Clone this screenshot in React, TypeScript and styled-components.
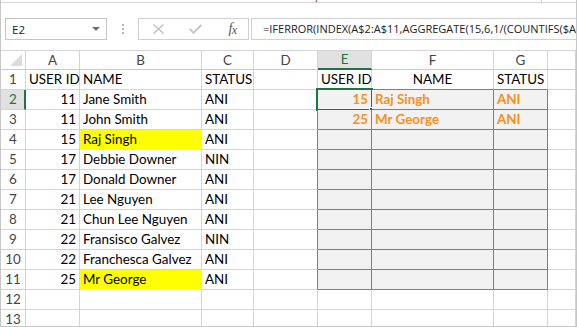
import React from 'react';
import styled, { createGlobalStyle, css } from 'styled-components';

const Global = createGlobalStyle`
  html, body { margin: 0; padding: 0; background: #fff; }
  body { width: 577px; height: 327px; overflow: hidden; }
  * { box-sizing: border-box; }
`;

const Window = styled.div`
  width: 577px;
  height: 327px;
  display: flex;
  flex-direction: column;
  border-left: 1px solid #c6c6c6;
  border-right: 1px solid #c6c6c6;
  border-bottom: 1px solid #c6c6c6;
  overflow: hidden;
  background: #fff;
`;

const Ribbon = styled.div`
  height: 3px;
  flex: none;
  display: flex;
  border-bottom: 1px solid #d4d4d4;
  overflow: hidden;
  position: relative;
`;

const RibbonLabel = styled.div`
  margin-left: 228px;
  margin-top: -11px;
  font: 12px 'Open Sans', sans-serif;
  line-height: 13px;
  color: #555;
  white-space: nowrap;
  width: 313px;
  border-right: 1px solid #d4d4d4;
  height: 16px;
`;

const FormulaBar = styled.div`
  height: 47px;
  flex: none;
  display: flex;
  align-items: flex-start;
  padding: 15px 0 0 4px;
`;

const NameBox = styled.div`
  width: 102px;
  height: 22px;
  border: 1px solid #c6c6c6;
  display: flex;
  align-items: center;
  justify-content: space-between;
  padding: 0 6px 0 6px;
  font: 11.5px 'Open Sans', sans-serif;
  color: #222;
`;

const Dots = styled.div`
  width: 31px;
  height: 22px;
  display: flex;
  flex-direction: column;
  align-items: center;
  justify-content: center;
  gap: 2px;
  & > span {
    width: 2px;
    height: 2px;
    background: #b5b5b5;
  }
`;

const ButtonBox = styled.div`
  width: 111px;
  height: 22px;
  border: 1px solid #d0d0d0;
  display: grid;
  grid-template-columns: 38px 36px 1fr;
  align-items: center;
  justify-items: center;
`;

const Fx = styled.span`
  font: italic 14px 'Liberation Serif', serif;
  color: #555;
  letter-spacing: -0.5px;
  padding-left: 4px;
  & > sub {
    font-size: 12px;
    vertical-align: -1px;
  }
`;

const FormulaInput = styled.div`
  flex: 1;
  margin-left: 2px;
  height: 22px;
  border: 1px solid #d0d0d0;
  border-right: none;
  padding-left: 11px;
  font: 11px 'Open Sans', sans-serif;
  line-height: 20px;
  color: #222;
  white-space: nowrap;
  overflow: hidden;
`;

const Sheet = styled.div`
  flex: 1;
  overflow: hidden;
  border-top: 1px solid #d4d4d4;
  display: grid;
  grid-template-columns: 25px 54px 122px 52px 64px 54px 122px 54px 1fr;
  grid-template-rows: 19px repeat(13, 20px);
`;

const HeaderBase = css`
  border-right: 1px solid #d4d4d4;
  border-bottom: 1px solid #c8c8c8;
  font: 13.4px 'Lato', 'Noto Sans', sans-serif;
  color: #444;
  text-align: center;
  white-space: nowrap;
`;

const Corner = styled.div`
  ${HeaderBase};
  position: relative;
  & > i {
    position: absolute;
    right: 3px;
    bottom: 3px;
    width: 12px;
    height: 12px;
    background: #dcdcdc;
    clip-path: polygon(100% 0, 100% 100%, 0 100%);
  }
`;

const ColHead = styled.div<{ $active?: boolean }>`
  ${HeaderBase};
  line-height: 18px;
  ${(p) =>
    p.$active &&
    css`
      background: #e1e1e1;
      color: #217346;
      border-bottom: 2px solid #217346;
      line-height: 17px;
    `}
`;

const RowHead = styled.div<{ $active?: boolean }>`
  ${HeaderBase};
  border-bottom: 1px solid #d4d4d4;
  line-height: 19px;
  ${(p) =>
    p.$active &&
    css`
      background: #e1e1e1;
      color: #217346;
      border-right: 2px solid #217346;
      padding-left: 1px;
    `}
`;

const Cell = styled.div<{
  $align?: 'left' | 'right' | 'center';
  $yellow?: boolean;
  $result?: boolean;
  $orange?: boolean;
  $darkRight?: boolean;
  $darkBottom?: boolean;
}>`
  position: relative;
  border-right: 1px solid #d4d4d4;
  border-bottom: 1px solid #d4d4d4;
  font: 13.4px 'Lato', 'Noto Sans', sans-serif;
  line-height: 19px;
  color: #000;
  padding: 0 3px;
  white-space: nowrap;
  text-align: ${(p) => p.$align || 'left'};
  ${(p) =>
    p.$yellow &&
    css`
      background: #ffff00;
      border-right-color: #ffff00;
      border-bottom-color: #ffff00;
    `}
  ${(p) =>
    p.$result &&
    css`
      background: #f2f2f2;
      border-right-color: #7f7f7f;
      border-bottom-color: #7f7f7f;
    `}
  ${(p) =>
    p.$orange &&
    css`
      color: #f7901e;
      font-weight: 700;
    `}
  ${(p) => p.$darkRight && css`border-right-color: #7f7f7f;`}
  ${(p) => p.$darkBottom && css`border-bottom-color: #7f7f7f;`}
`;

const Selection = styled.div`
  position: absolute;
  left: -2px;
  top: -2px;
  width: 57px;
  height: 23px;
  border: 2px solid #217346;
  pointer-events: none;
  & > i {
    position: absolute;
    right: -4px;
    bottom: -4px;
    width: 6px;
    height: 6px;
    background: #217346;
    border: 1px solid #fff;
  }
`;

const cols = ['A', 'B', 'C', 'D', 'E', 'F', 'G', 'H'];

type Row = {
  id?: number;
  name?: string;
  status?: string;
  yellow?: boolean;
  rId?: number;
  rName?: string;
  rStatus?: string;
};

const data: Row[] = [
  { id: 11, name: 'Jane Smith', status: 'ANI', rId: 15, rName: 'Raj Singh', rStatus: 'ANI' },
  { id: 11, name: 'John Smith', status: 'ANI', rId: 25, rName: 'Mr George', rStatus: 'ANI' },
  { id: 15, name: 'Raj Singh', status: 'ANI', yellow: true },
  { id: 17, name: 'Debbie Downer', status: 'NIN' },
  { id: 17, name: 'Donald Downer', status: 'ANI' },
  { id: 21, name: 'Lee Nguyen', status: 'ANI' },
  { id: 21, name: 'Chun Lee Nguyen', status: 'ANI' },
  { id: 22, name: 'Fransisco Galvez', status: 'NIN' },
  { id: 22, name: 'Franchesca Galvez', status: 'ANI' },
  { id: 25, name: 'Mr George', status: 'ANI', yellow: true },
  {},
  {},
];

const formula =
  '=IFERROR(INDEX(A$2:A$11,AGGREGATE(15,6,1/(COUNTIFS($A$1:$A1,A$2:A$11)=0)*(C$2:C$11="ANI")*(ROW(A$2:A$11)-ROW(A$1)),1)),"")';

export default function App() {
  return (
    <>
      <Global />
      <Window>
        <Ribbon>
          <RibbonLabel>Function Library</RibbonLabel>
        </Ribbon>
        <FormulaBar>
          <NameBox>
            <span>E2</span>
            <svg width="8" height="5" viewBox="0 0 8 5">
              <path d="M0 0 L8 0 L4 4 Z" fill="#707070" />
            </svg>
          </NameBox>
          <Dots>
            <span />
            <span />
            <span />
          </Dots>
          <ButtonBox>
            <svg width="11" height="10" viewBox="0 0 11 10">
              <path d="M0.5 0.5 L10.5 9.5 M10.5 0.5 L0.5 9.5" stroke="#bcbcbc" strokeWidth="1.2" fill="none" />
            </svg>
            <svg width="13" height="10" viewBox="0 0 13 10">
              <path d="M0.8 5 L4.5 8.8 L12.3 1" stroke="#c4c4c4" strokeWidth="1.8" fill="none" />
            </svg>
            <Fx>
              f<sub>x</sub>
            </Fx>
          </ButtonBox>
          <FormulaInput>{formula}</FormulaInput>
        </FormulaBar>
        <Sheet>
          <Corner>
            <i />
          </Corner>
          {cols.map((c) => (
            <ColHead key={c} $active={c === 'E'}>
              {c === 'H' ? '' : c}
            </ColHead>
          ))}

          <RowHead>1</RowHead>
          <Cell>USER ID</Cell>
          <Cell>NAME</Cell>
          <Cell>STATUS</Cell>
          <Cell />
          <Cell $align="center" $darkBottom>
            USER ID
          </Cell>
          <Cell $align="center" $darkBottom>
            NAME
          </Cell>
          <Cell $align="center" $darkBottom>
            STATUS
          </Cell>
          <Cell />

          {data.map((r, i) => {
            const rowNum = i + 2;
            const inResult = rowNum <= 11;
            return (
              <React.Fragment key={rowNum}>
                <RowHead $active={rowNum === 2}>{rowNum}</RowHead>
                <Cell $align="right">{r.id ?? ''}</Cell>
                <Cell $yellow={r.yellow}>{r.name ?? ''}</Cell>
                <Cell>{r.status ?? ''}</Cell>
                <Cell $darkRight={inResult} />
                <Cell $align="right" $result={inResult} $orange={!!r.rId}>
                  {r.rId ?? ''}
                  {rowNum === 2 && (
                    <Selection>
                      <i />
                    </Selection>
                  )}
                </Cell>
                <Cell $result={inResult} $orange={!!r.rName}>
                  {r.rName ?? ''}
                </Cell>
                <Cell $result={inResult} $orange={!!r.rStatus}>
                  {r.rStatus ?? ''}
                </Cell>
                <Cell />
              </React.Fragment>
            );
          })}
        </Sheet>
      </Window>
    </>
  );
}
